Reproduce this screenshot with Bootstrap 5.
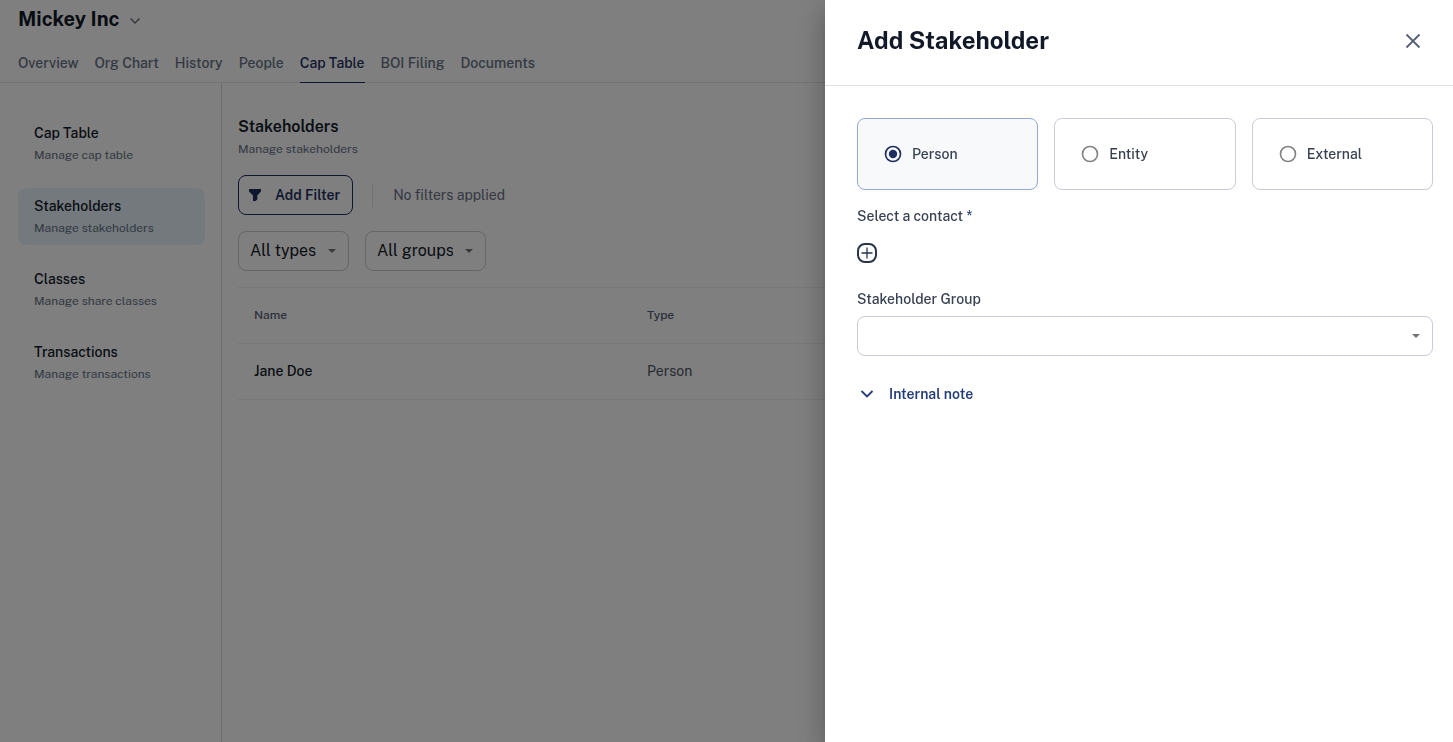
<!DOCTYPE html>
<html lang="en">
<head>
<meta charset="utf-8">
<meta name="viewport" content="width=device-width, initial-scale=1">
<title>Mickey Inc – Stakeholders</title>
<link href="https://cdn.jsdelivr.net/npm/bootstrap@5.3.0/dist/css/bootstrap.min.css" rel="stylesheet">
<style>
  :root {
    --ink: #111827;
    --slate: #374151;
    --muted: #667085;
    --navy: #1e2f5e;
    --line: #f0f1f3;
    --field: #c8ccd8;
  }
  body {
    font-family: "Public Sans", Inter, "Liberation Sans", sans-serif;
    font-size: 14px;
    line-height: 20px;
    color: var(--ink);
  }
  a { text-decoration: none; }
  .fw-mid { font-weight: 500; }
  .org-name { font-size: 20px; line-height: 28px; font-weight: 700; }
  .org-switch { padding: 5px 18px 0; gap: 8px; color: var(--ink); }
  .app-head { border-bottom: 1px solid #e5e7eb; }
  .tabs { gap: 16px; padding: 0 18px; margin-top: 10px; }
  .tabs .nav-link { padding: 10px 0 9px; margin-bottom: -1px; border-bottom: 1px solid transparent; color: var(--muted); font-weight: 500; }
  .tabs .nav-link.active { color: var(--navy); border-color: var(--navy); }
  .side { width: 222px; gap: 16px; padding: 32px 16px 16px 18px; border-right: 1px solid #d9dce1; }
  .side a { display: block; padding: 8px 16px 5px; border-radius: 8px; color: var(--ink); font-weight: 500; }
  .side a.active { background: #e6f3fb; }
  .sub { display: block; font-size: 12px; line-height: 20px; font-weight: 400; color: var(--muted); }
  .side .sub { line-height: 24px; }
  .work { padding: 32px 24px 0 16px; }
  .work h1 { font-size: 16px; line-height: 24px; font-weight: 600; margin: 0; }
  .btn-filter { height: 40px; padding: 0 12px 0 8px; gap: 12px; border: 1px solid var(--navy); border-radius: 8px; color: var(--navy); font-size: 14px; font-weight: 600; }
  .bar { width: 1px; height: 24px; margin: 0 20px 0 19px; background: #e5e7eb; }
  .none-yet { color: var(--muted); }
  .pick {
    appearance: none; height: 40px; padding: 0 32px 0 11px; font-size: 16px; line-height: 24px; color: var(--ink);
    border: 1px solid var(--field); border-radius: 8px;
    background: #fff url("data:image/svg+xml,%3Csvg xmlns='http://www.w3.org/2000/svg' width='8' height='4' viewBox='0 0 8 4'%3E%3Cpath d='M0 0h8L4 4z' fill='%23757575'/%3E%3C/svg%3E") no-repeat right 12px center;
  }
  .pick-wide { margin-top: 7px; }
  .pick-type { width: 111px; }
  .pick-group { width: 121px; }
  .holders { --bs-table-bg: transparent; border-top: 1px solid var(--line); margin: 16px 0 0; }
  .holders th, .holders td { padding: 0 16px 2px; height: 56px; vertical-align: middle; border-bottom: 1px solid var(--line); }
  .holders thead th { font-size: 12px; font-weight: 500; color: #566074; }
  .holders tbody th { font-weight: 500; color: var(--ink); }
  .holders tbody td { color: #4b5563; }
  .col-third { width: 33%; }
  .panel {
    --bs-offcanvas-width: 628px;
    max-width: 100%; border: 0 !important; color: var(--slate);
    box-shadow: 0 8px 10px -5px rgba(0,0,0,.2), 0 16px 24px 2px rgba(0,0,0,.14), 0 6px 30px 5px rgba(0,0,0,.12);
  }
  .panel-head { padding: 24px 30px 28px 32px; border-bottom: 1px solid #dfe2ea; }
  .panel-head h2 { font-size: 24px; line-height: 33px; font-weight: 700; color: var(--ink); margin: 0; }
  .panel-body { padding: 32px 20px 32px 32px; }
  .choice { flex: 1 1 0; height: 72px; padding: 0 25px; gap: 9px; border: 1px solid var(--field); border-radius: 8px; font-weight: 500; cursor: pointer; }
  .choice:has(:checked) { border-color: #93a8d0; background: #f7f9fb; }
  .choice input {
    appearance: none; width: 20px; height: 20px; margin: 0;
    background: url("data:image/svg+xml,%3Csvg xmlns='http://www.w3.org/2000/svg' viewBox='0 0 24 24'%3E%3Ccircle cx='12' cy='12' r='9' fill='none' stroke='%23858585' stroke-width='2'/%3E%3C/svg%3E");
  }
  .choice input:checked {
    background: url("data:image/svg+xml,%3Csvg xmlns='http://www.w3.org/2000/svg' viewBox='0 0 24 24'%3E%3Ccircle cx='12' cy='12' r='9' fill='none' stroke='%231e2f5e' stroke-width='2'/%3E%3Ccircle cx='12' cy='12' r='5' fill='%231e2f5e'/%3E%3C/svg%3E");
  }
  .required { color: #243c78; }
  .add-contact { margin: 17px 0 26px; }
  .note-toggle { gap: 12px; margin-top: 28px; color: #243c78; font-size: 14px; line-height: 20px; font-weight: 600; }
  svg { display: block; }
</style>
</head>
<body>
<div class="d-flex flex-column min-vh-100">
  <header class="app-head">
    <button type="button" class="org-switch btn border-0 d-flex align-items-center">
      <span class="org-name">Mickey Inc</span>
      <svg width="16" height="16" viewBox="0 0 16 16" fill="none" stroke="#6b7280" stroke-width="1.5" aria-hidden="true"><path d="M3.500 7.500 8 12l4.500-4.500"/></svg>
    </button>
    <nav class="tabs nav flex-nowrap" aria-label="Company">
      <a class="nav-link" href="#">Overview</a>
      <a class="nav-link" href="#">Org Chart</a>
      <a class="nav-link" href="#">History</a>
      <a class="nav-link" href="#">People</a>
      <a class="nav-link active" href="#">Cap Table</a>
      <a class="nav-link" href="#">BOI Filing</a>
      <a class="nav-link" href="#">Documents</a>
    </nav>
  </header>
  <div class="d-flex flex-grow-1">
    <nav class="side d-flex flex-column flex-shrink-0" aria-label="Cap table">
      <a href="#">Cap Table<span class="sub">Manage cap table</span></a>
      <a href="#" class="active">Stakeholders<span class="sub">Manage stakeholders</span></a>
      <a href="#">Classes<span class="sub">Manage share classes</span></a>
      <a href="#">Transactions<span class="sub">Manage transactions</span></a>
    </nav>
    <main class="work flex-grow-1">
      <h1>Stakeholders</h1>
      <span class="sub">Manage stakeholders</span>
      <div class="d-flex align-items-center mt-3">
        <button type="button" class="btn btn-filter d-flex align-items-center">
          <svg width="16" height="16" viewBox="0 0 16 16" fill="currentColor" aria-hidden="true"><path d="M2 2h12v2.500L10.300 8.500V12.500L8.500 14H6V8.500L2 4.500z"/></svg>
          Add Filter
        </button>
        <span class="bar"></span>
        <span class="none-yet">No filters applied</span>
      </div>
      <div class="d-flex gap-3 mt-3">
        <select class="pick pick-type" aria-label="Type"><option>All types</option></select>
        <select class="pick pick-group" aria-label="Group"><option>All groups</option></select>
      </div>
      <table class="table holders">
        <thead><tr><th class="col-third" scope="col">Name</th><th scope="col">Type</th></tr></thead>
        <tbody><tr><th scope="row">Jane Doe</th><td>Person</td></tr></tbody>
      </table>
    </main>
  </div>
</div>

<div class="offcanvas-backdrop show"></div>

<section class="offcanvas offcanvas-end show panel" data-bs-backdrop="false" tabindex="-1" role="dialog" aria-labelledby="panelTitle">
  <div class="panel-head d-flex align-items-center justify-content-between">
    <h2 id="panelTitle">Add Stakeholder</h2>
    <button type="button" class="btn p-0 border-0" aria-label="Close">
      <svg width="20" height="20" viewBox="0 0 20 20" fill="none" stroke="#566074" stroke-width="1.800" aria-hidden="true"><path d="m3.500 3.500 13 13m0-13-13 13"/></svg>
    </button>
  </div>
  <form class="panel-body">
    <div class="d-flex gap-3">
      <label class="choice d-flex align-items-center"><input type="radio" name="kind" checked>Person</label>
      <label class="choice d-flex align-items-center"><input type="radio" name="kind">Entity</label>
      <label class="choice d-flex align-items-center"><input type="radio" name="kind">External</label>
    </div>
    <div class="fw-mid mt-3">Select a contact <span class="required">*</span></div>
    <button type="button" class="btn p-0 border-0 d-block add-contact" aria-label="Add contact">
      <svg width="20" height="20" viewBox="0 0 20 20" fill="none" stroke="#293449" aria-hidden="true"><rect x="1" y="1" width="18" height="18" rx="7" stroke-width="2"/><path d="M10 4.500v11M4.500 10h11" stroke-width="1.300"/></svg>
    </button>
    <label class="fw-mid d-block" for="group">Stakeholder Group</label>
    <select id="group" class="pick pick-wide w-100"><option></option></select>
    <button type="button" class="btn p-0 border-0 note-toggle d-flex align-items-center">
      <svg width="20" height="20" viewBox="0 0 20 20" fill="none" stroke="currentColor" stroke-width="1.800" aria-hidden="true"><path d="m4.500 7 5.500 5.500L15.500 7"/></svg>
      Internal note
    </button>
  </form>
</section>
<script src="https://cdn.jsdelivr.net/npm/bootstrap@5.3.0/dist/js/bootstrap.bundle.min.js"></script>
</body>
</html>
